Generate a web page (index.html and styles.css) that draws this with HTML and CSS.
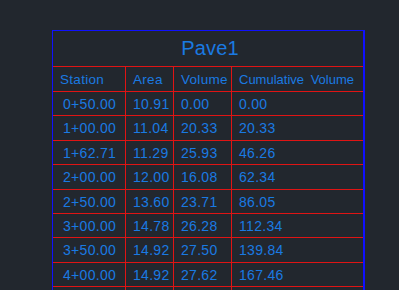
FILE: index.html
```html
<!DOCTYPE html>
<html>
<head>
<meta charset="utf-8">
<link rel="stylesheet" href="styles.css">
</head>
<body>
<div class="table">
  <div class="title">Pave1</div>
  <div class="grid">
    <div class="cell head">Station</div>
    <div class="cell head">Area</div>
    <div class="cell head">Volume</div>
    <div class="cell head wide">Cumulative Volume</div>

    <div class="cell c1">0+50.00</div><div class="cell">10.91</div><div class="cell">0.00</div><div class="cell">0.00</div>
    <div class="cell c1">1+00.00</div><div class="cell">11.04</div><div class="cell">20.33</div><div class="cell">20.33</div>
    <div class="cell c1">1+62.71</div><div class="cell">11.29</div><div class="cell">25.93</div><div class="cell">46.26</div>
    <div class="cell c1">2+00.00</div><div class="cell">12.00</div><div class="cell">16.08</div><div class="cell">62.34</div>
    <div class="cell c1">2+50.00</div><div class="cell">13.60</div><div class="cell">23.71</div><div class="cell">86.05</div>
    <div class="cell c1">3+00.00</div><div class="cell">14.78</div><div class="cell">26.28</div><div class="cell">112.34</div>
    <div class="cell c1">3+50.00</div><div class="cell">14.92</div><div class="cell">27.50</div><div class="cell">139.84</div>
    <div class="cell c1">4+00.00</div><div class="cell">14.92</div><div class="cell">27.62</div><div class="cell">167.46</div>
    <div class="cell c1 stub"></div><div class="cell stub"></div><div class="cell stub"></div><div class="cell stub"></div>
  </div>
</div>
</body>
</html>
```

FILE: styles.css
```css
html, body {
  margin: 0;
  padding: 0;
  background: #22272e;
}
body {
  width: 399px;
  height: 290px;
  overflow: hidden;
  font-family: "Liberation Sans", Arial, sans-serif;
  color: #1a7ae2;
}
.table {
  margin: 30px 0 0 52px;
  width: 313px;
  height: 260px;
  box-sizing: border-box;
  border-top: 1px solid #1010ff;
  border-left: 1px solid #1010ff;
  border-right: 2px solid #1010ff;
}
.title {
  height: 35px;
  border-bottom: 1px solid #e01414;
  display: flex;
  align-items: center;
  justify-content: center;
  font-size: 20px;
  letter-spacing: 0.2px;
  padding-left: 4px;
}
.grid {
  display: grid;
  grid-template-columns: 72px 48px 58px 132px;
  grid-template-rows: 25px 24px 25px 24px 25px 24px 24px 25px 24px 3px;
}
.cell {
  box-sizing: border-box;
  min-width: 0;
  border-bottom: 1px solid #e01414;
  border-left: 1px solid #e01414;
  display: flex;
  align-items: center;
  font-size: 14px;
  letter-spacing: 0.3px;
  padding-left: 7px;
  white-space: nowrap;
  color: #1a7ae2;
}
.grid > .cell:nth-child(4n+1) {
  border-left: none;
}
.cell.stub {
  border-bottom: none;
}
.head {
  font-size: 13.5px;
  padding-top: 1px;
}
.wide {
  font-size: 13px;
  letter-spacing: 0;
  word-spacing: 3px;
}
.c1 {
  padding-left: 10px;
}
```
